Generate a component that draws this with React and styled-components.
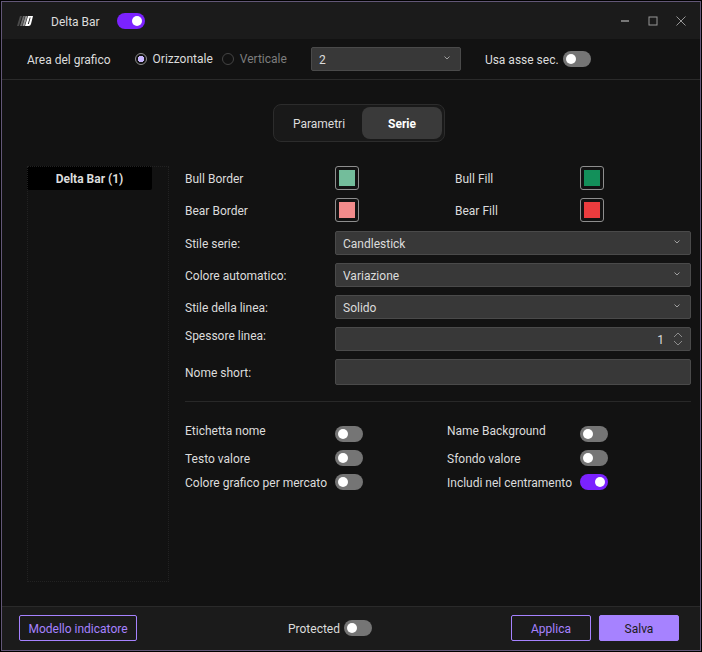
import React, { useState } from "react";
import styled, { createGlobalStyle } from "styled-components";

const seriesSelects = [
  { id: "style", label: "Stile serie:", options: ["Candlestick", "Linea", "Istogramma"] },
  { id: "color", label: "Colore automatico:", options: ["Variazione", "Nessuno"] },
  { id: "line", label: "Stile della linea:", options: ["Solido", "Tratteggiato"] },
];

const swatches = [
  { id: "bullBorder", label: "Bull Border", color: "#73bd9b" },
  { id: "bullFill", label: "Bull Fill", color: "#13905a" },
  { id: "bearBorder", label: "Bear Border", color: "#f28b8b" },
  { id: "bearFill", label: "Bear Fill", color: "#eb3c3e" },
];

const flags = [
  { id: "name", label: "Etichetta nome", top: true },
  { id: "nameBg", label: "Name Background", top: true },
  { id: "value", label: "Testo valore" },
  { id: "valueBg", label: "Sfondo valore" },
  { id: "market", label: "Colore grafico per mercato" },
  { id: "center", label: "Includi nel centramento", on: true },
];

function Select({ id, options }) {
  return (
    <SelectBox>
      <SelectInput id={id}>
        {options.map((o) => (
          <option key={o}>{o}</option>
        ))}
      </SelectInput>
      <Chevron viewBox="0 0 8 8" aria-hidden="true">
        <path d="M1.5 2.5 L4 5 L6.5 2.5" />
      </Chevron>
    </SelectBox>
  );
}

function App() {
  const [tab, setTab] = useState("Serie");
  const [direction, setDirection] = useState("Orizzontale");
  const [width, setWidth] = useState(1);

  return (
    <Dialog>
      <GlobalStyle />
      <TitleBar>
        <Logo viewBox="0 0 16 12" aria-hidden="true">
          <path d="M3 1 H5 L2 11 H0 Z" fill="#4a4a4a" />
          <path d="M6 1 H8 L5 11 H3 Z" fill="#6c6c6c" />
          <path d="M8.5 1 H10.5 L7.5 11 H5.5 Z" fill="#9c9c9c" />
          <path
            d="M11 1 H16 L14 9 Q13.5 11 11.5 11 H8 Z M12.8 2.5 L10.8 9 H11.8 L13.6 2.5 Z"
            fill="#ffffff"
            fillRule="evenodd"
          />
        </Logo>
        <Title htmlFor="enabled">Delta Bar</Title>
        <Toggle id="enabled" defaultChecked />
        <WindowButtons>
          <WindowButton aria-label="Minimize">
            <svg width="10" height="10" viewBox="0 0 10 10">
              <path d="M1 5 H9" strokeWidth="2" stroke="#777" />
            </svg>
          </WindowButton>
          <WindowButton aria-label="Maximize">
            <svg width="10" height="10" viewBox="0 0 10 10">
              <rect x="1" y="1" width="8" height="8" />
            </svg>
          </WindowButton>
          <WindowButton aria-label="Close">
            <svg width="10" height="10" viewBox="0 0 10 10">
              <path d="M0.5 0.5 L9.5 9.5 M9.5 0.5 L0.5 9.5" />
            </svg>
          </WindowButton>
        </WindowButtons>
      </TitleBar>

      <ToolBar>
        <Label htmlFor="area">Area del grafico</Label>
        <RadioGroup>
          {["Orizzontale", "Verticale"].map((d) => (
            <RadioLabel key={d} $dim={d !== direction}>
              <Radio name="direction" checked={d === direction} onChange={() => setDirection(d)} />
              {d}
            </RadioLabel>
          ))}
        </RadioGroup>
        <AreaSelect>
          <Select id="area" options={["2", "1", "3"]} />
        </AreaSelect>
        <Inline>
          <Label htmlFor="secAxis">Usa asse sec.</Label>
          <Toggle id="secAxis" />
        </Inline>
      </ToolBar>

      <Content>
        <Tabs role="tablist">
          {["Parametri", "Serie"].map((t) => (
            <Tab key={t} role="tab" aria-selected={t === tab} $active={t === tab} onClick={() => setTab(t)}>
              {t}
            </Tab>
          ))}
        </Tabs>
        <Columns>
          <SeriesList>
            <SeriesItem>Delta Bar (1)</SeriesItem>
          </SeriesList>
          <Form>
            <SwatchGrid>
              {swatches.map((s) => (
                <React.Fragment key={s.id}>
                  <Label htmlFor={s.id}>{s.label}</Label>
                  <Swatch id={s.id} defaultValue={s.color} />
                </React.Fragment>
              ))}
            </SwatchGrid>
            <FieldGrid>
              {seriesSelects.map((s) => (
                <React.Fragment key={s.id}>
                  <Label htmlFor={s.id}>{s.label}</Label>
                  <Select id={s.id} options={s.options} />
                </React.Fragment>
              ))}
              <Label htmlFor="width" $top>
                Spessore linea:
              </Label>
              <SpinBox>
                <SpinInput id="width" value={width} onChange={(e) => setWidth(Number(e.target.value))} />
                <SpinButtons>
                  <SpinButton aria-label="Aumenta" onClick={() => setWidth(width + 1)}>
                    <svg width="10" height="6" viewBox="0 0 10 6">
                      <path d="M1 5 L5 1 L9 5" />
                    </svg>
                  </SpinButton>
                  <SpinButton aria-label="Diminuisci" onClick={() => setWidth(Math.max(1, width - 1))}>
                    <svg width="10" height="6" viewBox="0 0 10 6">
                      <path d="M1 1 L5 5 L9 1" />
                    </svg>
                  </SpinButton>
                </SpinButtons>
              </SpinBox>
              <Label htmlFor="short">Nome short:</Label>
              <TextInput id="short" />
            </FieldGrid>
            <Divider />
            <FlagGrid>
              {flags.map((f) => (
                <React.Fragment key={f.id}>
                  <Label htmlFor={f.id} $top={f.top}>
                    {f.label}
                  </Label>
                  <Toggle id={f.id} defaultChecked={f.on} />
                </React.Fragment>
              ))}
            </FlagGrid>
          </Form>
        </Columns>
      </Content>

      <Footer>
        <Button $width="118px">Modello indicatore</Button>
        <Protected>
          <Label htmlFor="protected">Protected</Label>
          <Toggle id="protected" />
        </Protected>
        <Actions>
          <Button $width="80px">Applica</Button>
          <Button $width="80px" $primary>
            Salva
          </Button>
        </Actions>
      </Footer>
    </Dialog>
  );
}

export default App;

const GlobalStyle = createGlobalStyle`
  * {
    box-sizing: border-box;
  }
  body {
    margin: 0;
    padding: 1px;
    background: #000;
  }
  body, button, input, select {
    font-family: Roboto, "Open Sans", sans-serif;
    font-size: 12px;
    line-height: 18px;
  }
`;

const Dialog = styled.main`
  display: flex;
  flex-direction: column;
  min-height: calc(100vh - 2px);
  border: 1px solid #625777;
  background: #121212;
  color: #dcdcdc;
`;

const TitleBar = styled.header`
  display: flex;
  align-items: center;
  height: 37px;
  padding: 0 5px 0 15px;
  background: #1b1b1b;
`;

const Logo = styled.svg`
  width: 16px;
  height: 12px;
`;

const Title = styled.label`
  margin: 0 17px 0 18px;
  padding-top: 2px;
`;

const WindowButtons = styled.div`
  display: flex;
  margin-left: auto;
`;

const WindowButton = styled.button`
  display: flex;
  align-items: center;
  justify-content: center;
  width: 28px;
  height: 28px;
  padding: 0;
  border: 0;
  background: none;
  svg {
    fill: none;
    stroke: #979797;
  }
`;

const ToolBar = styled.div`
  display: flex;
  align-items: center;
  gap: 24px;
  height: 41px;
  padding: 0 25px;
  border-bottom: 1px solid #2a2a2a;
`;

const Label = styled.label`
  white-space: nowrap;
  align-self: ${({ $top }) => ($top ? "start" : "center")};
  padding-top: ${({ $top }) => ($top ? "0" : "2px")};
`;

const Inline = styled.div`
  display: flex;
  align-items: center;
  gap: 4px;
`;

const Toggle = styled.input.attrs({ type: "checkbox", role: "switch" })`
  appearance: none;
  flex: none;
  align-self: center;
  width: 28px;
  height: 16px;
  margin: 0;
  border-radius: 8px;
  background: #757575;
  &::before {
    content: "";
    display: block;
    width: 10px;
    height: 10px;
    margin: 3px;
    border-radius: 50%;
    background: #fff;
  }
  &:checked {
    background: #7b22ff;
  }
  &:checked::before {
    margin-left: 15px;
  }
`;

const RadioGroup = styled.div`
  display: flex;
  gap: 9px;
`;

const RadioLabel = styled.label`
  display: flex;
  align-items: center;
  gap: 6px;
  color: ${({ $dim }) => ($dim ? "#7d7d7d" : "#dcdcdc")};
`;

const Radio = styled.input.attrs({ type: "radio" })`
  appearance: none;
  width: 12px;
  height: 12px;
  margin: 0;
  border: 1px solid #444;
  border-radius: 50%;
  &:checked {
    border-color: #8c8c8c;
    background: radial-gradient(circle, #c9b8ff 0 3px, transparent 3px);
  }
`;

const AreaSelect = styled.div`
  width: 150px;
`;

const SelectBox = styled.div`
  position: relative;
`;

const SelectInput = styled.select`
  appearance: none;
  display: block;
  width: 100%;
  height: 24px;
  padding: 2px 7px 0;
  border: 1px solid #4a4a4a;
  border-radius: 2px;
  background: #383838;
  color: #dcdcdc;
`;

const Chevron = styled.svg`
  position: absolute;
  top: 7px;
  right: 10px;
  width: 8px;
  height: 8px;
  fill: none;
  stroke: #a0a0a0;
  pointer-events: none;
`;

const Content = styled.section`
  display: flex;
  flex: 1;
  flex-direction: column;
  gap: 24px;
  padding: 24px 9px 24px 25px;
`;

const Tabs = styled.div`
  display: flex;
  align-self: center;
  height: 38px;
  padding: 2px;
  border: 1px solid #2c2c2c;
  border-radius: 8px;
  background: #191919;
`;

const Tab = styled.button`
  width: ${({ $active }) => ($active ? "80px" : "86px")};
  padding: 2px 0 0;
  border: 0;
  border-radius: 8px;
  background: ${({ $active }) => ($active ? "#3a3a3a" : "none")};
  color: ${({ $active }) => ($active ? "#fff" : "#dcdcdc")};
  font-weight: ${({ $active }) => ($active ? 700 : 400)};
`;

const Columns = styled.div`
  display: flex;
  flex: 1;
  gap: 16px;
`;

const SeriesList = styled.div`
  flex: none;
  width: 142px;
  outline: 1px dotted #222;
  outline-offset: -1px;
`;

const SeriesItem = styled.button`
  display: block;
  width: 125px;
  height: 24px;
  padding: 2px 0 0;
  border: 0;
  border-radius: 2px;
  background: #000;
  color: #dcdcdc;
  font-weight: 700;
`;

const Form = styled.form`
  flex: 1;
`;

const SwatchGrid = styled.div`
  display: grid;
  grid-template-columns: 150px 120px 125px 1fr;
  row-gap: 8px;
  margin-bottom: 9px;
`;

const Swatch = styled.input.attrs({ type: "color" })`
  appearance: none;
  display: block;
  width: 24px;
  height: 24px;
  padding: 3px;
  border: 1px solid #8e8e8e;
  border-radius: 3px;
  background: #121212;
  &::-webkit-color-swatch-wrapper {
    padding: 0;
  }
  &::-webkit-color-swatch {
    border: 0;
  }
`;

const FieldGrid = styled.div`
  display: grid;
  grid-template-columns: 150px 1fr;
  row-gap: 8px;
`;

const TextInput = styled.input`
  display: block;
  width: 100%;
  height: 26px;
  padding: 2px 8px 0;
  border: 1px solid #4a4a4a;
  border-radius: 2px;
  background: #383838;
  color: #dcdcdc;
`;

const SpinBox = styled.div`
  position: relative;
`;

const SpinInput = styled(TextInput).attrs({ inputMode: "numeric" })`
  height: 24px;
  padding-right: 26px;
  text-align: right;
`;

const SpinButtons = styled.div`
  position: absolute;
  top: 5px;
  right: 8px;
  display: grid;
  gap: 2px;
`;

const SpinButton = styled.button.attrs({ type: "button" })`
  display: flex;
  padding: 0;
  border: 0;
  background: none;
  svg {
    fill: none;
    stroke: #8c8c8c;
  }
`;

const Divider = styled.hr`
  height: 1px;
  margin: 16px 0 20px;
  border: 0;
  background: #282828;
`;

const FlagGrid = styled.div`
  display: grid;
  grid-template-columns: 150px 112px 133px 1fr;
  grid-template-rows: 24px 24px 24px;
`;

const Footer = styled.footer`
  display: flex;
  align-items: flex-start;
  height: 44px;
  padding: 8px 21px 0 17px;
  border-top: 1px solid #2a2a2a;
  background: #1b1b1b;
`;

const Protected = styled(Inline)`
  flex: 1;
  justify-content: center;
  height: 26px;
  padding-left: 12px;
`;

const Actions = styled.div`
  display: flex;
  gap: 8px;
`;

const Button = styled.button`
  width: ${({ $width }) => $width};
  height: 26px;
  padding: 2px 0 0;
  border: 1px solid #a682ff;
  border-radius: 2px;
  background: ${({ $primary }) => ($primary ? "#a682ff" : "none")};
  color: ${({ $primary }) => ($primary ? "#1b1b1b" : "#a682ff")};
`;
